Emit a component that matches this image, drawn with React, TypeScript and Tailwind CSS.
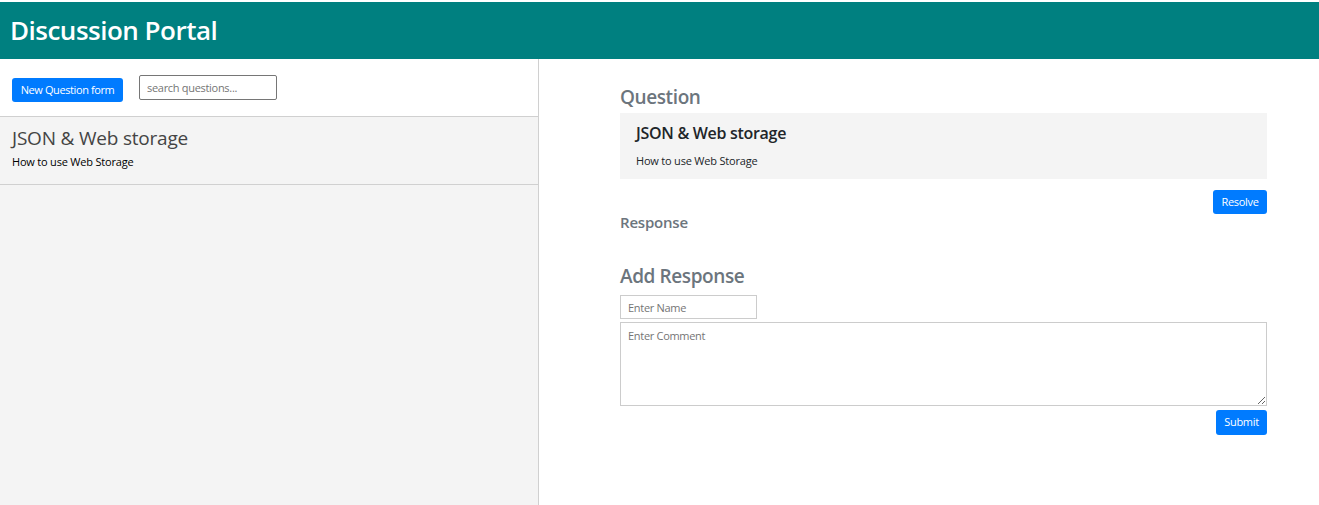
export default function App() {
  return (
    <div className="h-[505px] flex flex-col bg-white font-['Open_Sans',sans-serif] text-[#212529] overflow-hidden">
      <header className="mt-[2px] h-[57px] bg-[#008080] flex items-center px-[10px]">
        <h1 className="text-[26px] font-semibold text-white tracking-[-0.5px]">Discussion Portal</h1>
      </header>

      <div className="flex flex-1 min-h-0">
        {/* Left: list of questions */}
        <aside className="w-[539px] border-r border-[#d0d0d0] flex flex-col">
          <div className="h-[58px] flex items-center gap-4 px-3 border-b border-[#d0d0d0] bg-white">
            <button className="h-6 w-[111px] rounded-[3px] bg-[#007bff] text-white text-[11px] tracking-[-0.4px] mt-[5px]">
              New Question form
            </button>
            <input
              className="w-[138px] h-[25px] border border-[#767676] rounded-[2px] px-[7px] text-[11px] tracking-[-0.3px] placeholder:text-[#757575] outline-none"
              placeholder="search questions..."
            />
          </div>
          <div className="flex-1 bg-[#f4f4f4]">
            <div className="h-[68px] border-b border-[#d0d0d0] px-3 pt-[9px]">
              <div className="text-[19px] font-medium text-[#444] leading-[24px] tracking-[-0.2px]">JSON &amp; Web storage</div>
              <div className="text-[11px] text-black mt-[4px] tracking-[-0.2px]">How to use Web Storage</div>
            </div>
          </div>
        </aside>

        {/* Right: question details */}
        <main className="flex-1">
          <div className="ml-[81px] w-[647px] pt-[26px]">
            <h2 className="text-[19px] font-semibold text-[#6c757d] leading-[24px] tracking-[-0.4px]">Question</h2>
            <div className="mt-[4px] h-[66px] bg-[#f4f4f4] px-4 pt-[9px]">
              <div className="text-[16px] font-semibold text-[#212529] leading-[22px] tracking-[-0.3px]">JSON &amp; Web storage</div>
              <div className="text-[11px] text-[#212529] mt-[9px] tracking-[-0.2px]">How to use Web Storage</div>
            </div>
            <div className="flex justify-end mt-[11px]">
              <button className="h-6 w-[54px] rounded-[3px] bg-[#007bff] text-white text-[11px] tracking-[-0.3px]">Resolve</button>
            </div>
            <h3 className="text-[15px] font-semibold text-[#6c757d] leading-[20px] -mt-[2px] tracking-[-0.2px]">Response</h3>

            <h2 className="text-[19px] font-semibold text-[#6c757d] leading-[24px] mt-[32px] tracking-[-0.4px]">Add Response</h2>
            <input
              className="block mt-[7px] w-[137px] h-[24px] border border-[#ccc] px-[7px] text-[11px] tracking-[-0.3px] placeholder:text-[#757575] outline-none"
              placeholder="Enter Name"
            />
            <textarea
              className="block mt-[3px] w-[647px] h-[84px] border border-[#ccc] px-[7px] py-[5px] text-[11px] tracking-[-0.3px] placeholder:text-[#757575] outline-none"
              placeholder="Enter Comment"
            />
            <div className="flex justify-end mt-[4px]">
              <button className="h-[25px] w-[51px] rounded-[3px] bg-[#007bff] text-white text-[11px] tracking-[-0.3px]">Submit</button>
            </div>
          </div>
        </main>
      </div>
    </div>
  )
}
